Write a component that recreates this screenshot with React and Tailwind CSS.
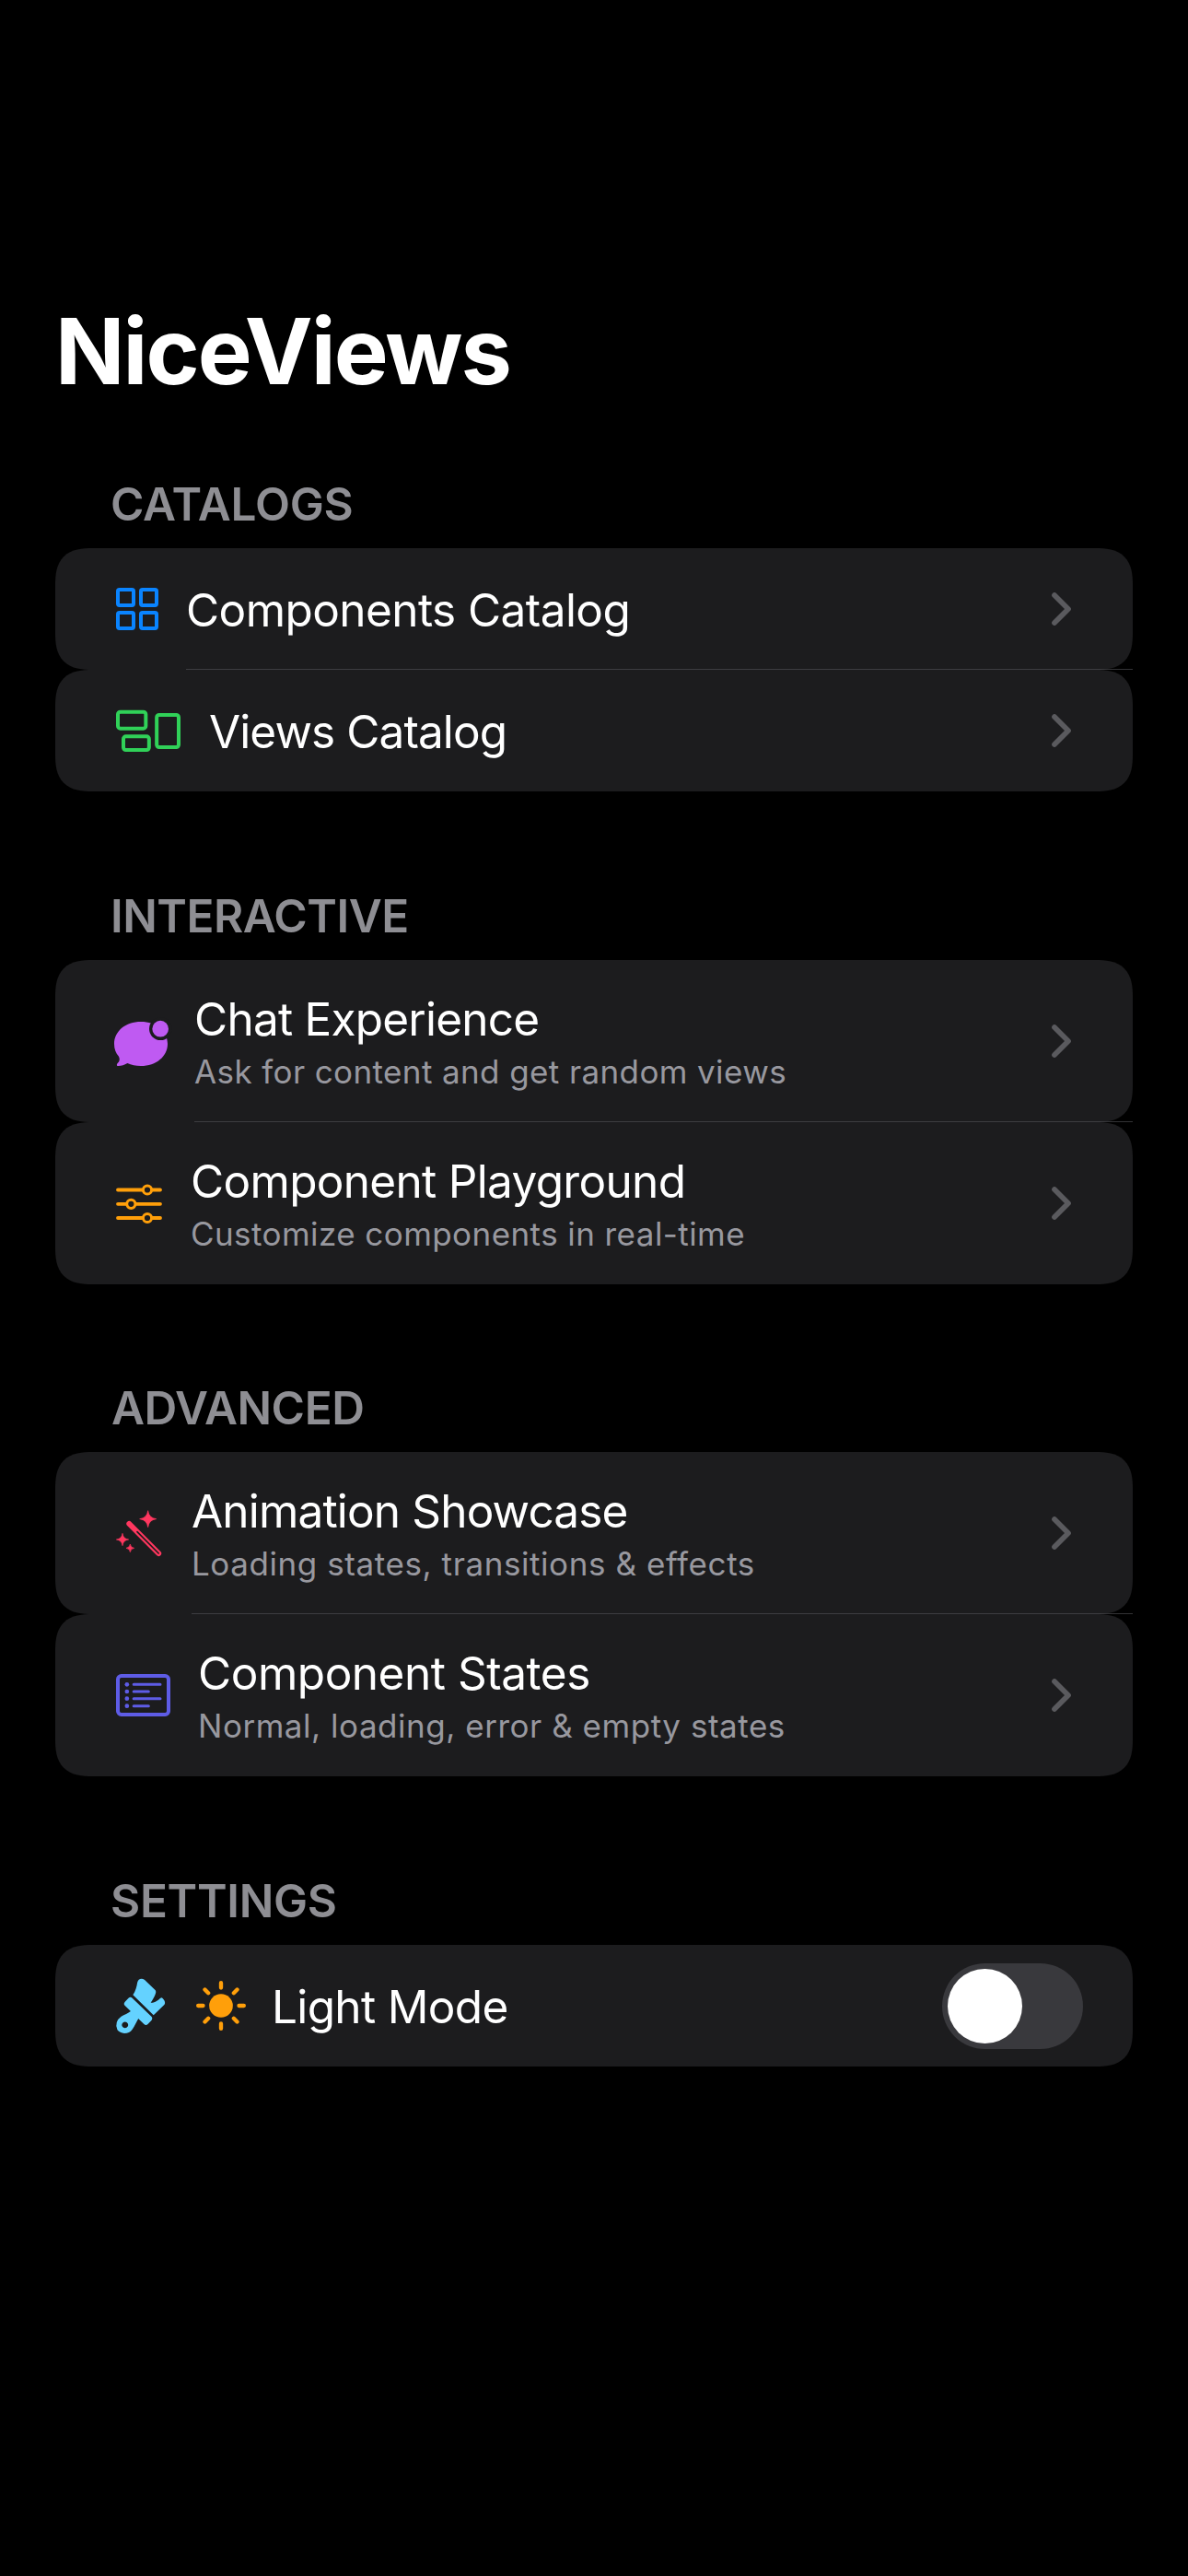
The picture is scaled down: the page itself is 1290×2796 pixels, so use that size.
const CARD = "#1c1c1e";

function IconBox({ viewBox, square, children }) {
  return (
    <svg viewBox={viewBox} className={square ? "h-[60px] w-[60px] shrink-0" : "h-[60px] w-[74px] shrink-0"} fill="none">
      {children}
    </svg>
  );
}

function GridIcon() {
  return (
    <IconBox viewBox="249 153 222 180">
      <g stroke="#0a84ff" strokeWidth="12">
        <rect x="264" y="180" width="51" height="51" rx="5" />
        <rect x="339" y="180" width="51" height="51" rx="5" />
        <rect x="264" y="255" width="51" height="51" rx="5" />
        <rect x="339" y="255" width="51" height="51" rx="5" />
      </g>
    </IconBox>
  );
}

function GroupIcon() {
  return (
    <IconBox viewBox="249 549 222 180">
      <g stroke="#30d158" strokeWidth="12">
        <rect x="264" y="578" width="91" height="54" rx="8" />
        <rect x="282" y="658" width="83.500" height="44" rx="8" />
        <rect x="390.500" y="588" width="71.500" height="105" rx="8" />
      </g>
    </IconBox>
  );
}

function ChatIcon() {
  return (
    <IconBox viewBox="249 210 222 180">
      <path
        fill="#bf5af2"
        d="M339 237C389 237 426 268 426 309C426 350 389 381 339 381C322 381 308 378 295 372C285 378 276 381 265 381C259 381 260 375 263 372C270 366 271 358 267 350C257 339 252 326 252 309C252 268 289 237 339 237Z"
      />
      <circle cx="403" cy="260" r="37" fill={CARD} />
      <circle cx="402.500" cy="260" r="26.500" fill="#bf5af2" />
    </IconBox>
  );
}

function SlidersIcon() {
  return (
    <IconBox viewBox="249 738 222 180">
      <g stroke="#ff9f0a" strokeWidth="11.5" strokeLinecap="round">
        <path d="M264 784.500H402M264 830.500H402M264 876H402" />
        <g fill={CARD} strokeWidth="9">
          <circle cx="360" cy="784.500" r="13.800" />
          <circle cx="307" cy="830.500" r="13.800" />
          <circle cx="360" cy="876" r="13.800" />
        </g>
      </g>
    </IconBox>
  );
}

function WandIcon() {
  return (
    <IconBox viewBox="249 222 222 180">
      <g strokeLinecap="round">
        <path d="M301 282L396.500 378" stroke="#ff375f" strokeWidth="18" />
        <path d="M327 308L396.500 378" stroke={CARD} strokeWidth="5" />
      </g>
      <g fill="#ff375f" stroke="#ff375f" strokeWidth="2" strokeLinejoin="round">
        <path d="M362 239Q365 263 389 266Q365 269 362 293Q359 269 335 266Q359 263 362 239Z" />
        <path d="M279 313Q281 331 299 333Q281 335 279 353Q277 335 259 333Q277 331 279 313Z" />
        <path d="M304 348Q305.500 359.500 317 361Q305.500 362.500 304 374Q302.500 362.500 291 361Q302.500 359.500 304 348Z" />
      </g>
    </IconBox>
  );
}

function ListIcon() {
  return (
    <IconBox viewBox="249 750 222 180">
      <rect x="264" y="777" width="165" height="126" rx="11" stroke="#5e5ce6" strokeWidth="12" />
      <path
        d="M315.500 805H402M315.500 828H364M315.500 851H402M315.500 875H364"
        stroke="#5e5ce6"
        strokeWidth="9"
        strokeLinecap="round"
      />
      <g fill="#5e5ce6">
        <circle cx="293.500" cy="805" r="7" />
        <circle cx="293.500" cy="828" r="7" />
        <circle cx="293.500" cy="851" r="7" />
        <circle cx="293.500" cy="875" r="7" />
      </g>
    </IconBox>
  );
}

function BrushIcon() {
  return (
    <IconBox viewBox="249 351 222 180">
      <g fill="#64d2ff" transform="scale(1.0331 1)">
        <path d="M303 406C311 394 315 378 317 365Q320 353 330 353Q335 353 340 357L374 391Q377 395 374 403C371 412 366 421 359 431C373 432 382 423 390 416Q393 413 396 416C402 422 404 427 404 432Q404 436 401 439L368 472Z" />
        <path
          fillRule="evenodd"
          d="M278 441Q272 435 278 428L289 416Q295 410 301 416L362 477Q366 482 362 488L350 501Q344 507 338 501L320 483C315 492 310 505 301 518Q292 531 276 531Q262 530 254 520Q248 508 252 495Q256 483 266 476C276 470 288 466 296 459ZM278 493.500A10 10 0 1 0 278.100 493.500Z"
        />
      </g>
    </IconBox>
  );
}

function SunIcon() {
  return (
    <IconBox viewBox="510 354 180 180" square>
      <circle cx="600" cy="444" r="38.500" fill="#ff9f0a" />
      <path
        d="M600 369.500V385.500M600 502.500V518.500M525.500 444H541.500M658.500 444H674.500M547.500 391.500L558.500 402.500M652.500 391.500L641.500 402.500M547.500 496.500L558.500 485.500M652.500 496.500L641.500 485.500"
        stroke="#ff9f0a"
        strokeWidth="13"
        strokeLinecap="round"
      />
    </IconBox>
  );
}

function Chevron() {
  return (
    <svg viewBox="426 189 63 108" className="ml-auto h-[36px] w-[21px] shrink-0" fill="none">
      <path d="M435 198L480 243L435 288" stroke="#5a5a5e" strokeWidth="17" strokeLinecap="round" strokeLinejoin="round" />
    </svg>
  );
}

function Card({ children, divider, tall }) {
  return (
    <div className={tall ? "relative h-[176px]" : "relative h-[132px]"}>
      <div className="flex h-full items-center rounded-[41px] bg-[#1c1c1e] pr-[67px] pl-[63px] [corner-shape:superellipse(1.45)]">
        {children}
      </div>
      {divider && <div className={`absolute right-0 bottom-0 h-px bg-[#545458]/60 ${divider}`} />}
    </div>
  );
}

function Label({ className, children }) {
  return <div className={`pt-[2px] text-[49.5px] leading-[60px] whitespace-nowrap text-white ${className}`}>{children}</div>;
}

function TwoLine({ className, title, titleClass, sub, subClass }) {
  return (
    <div className={`pt-[4px] whitespace-nowrap ${className}`}>
      <div className={`text-[49.5px] leading-[62px] text-white ${titleClass}`}>{title}</div>
      <div className={`text-[35px] leading-[52px] text-[#98989f] ${subClass}`}>{sub}</div>
    </div>
  );
}

function Section({ title, titleClass, className, children }) {
  return (
    <section className={className}>
      <h2 className={`pb-[18px] text-[49.5px] leading-[60px] font-semibold text-[#8e8e93] ${titleClass}`}>{title}</h2>
      {children}
    </section>
  );
}

function Toggle() {
  return (
    <div className="-mr-[13px] ml-auto flex h-[93px] w-[153px] items-center rounded-full bg-[#39393d] pl-[6px]">
      <div className="size-[81px] rounded-full bg-white" />
    </div>
  );
}

export default function App() {
  return (
    <main className="h-[2796px] w-[1290px] overflow-hidden bg-black px-[60px] pt-[321px] font-['Inter',sans-serif]">
      <h1 className="text-[99px] leading-[120px] font-bold tracking-[-1.93px] text-white">NiceViews</h1>

      <Section title="CATALOGS" titleClass="pl-[60px] tracking-[-0.2px]" className="mt-[76px]">
        <Card divider="left-[142px]">
          <GridIcon />
          <Label className="ml-[5px] tracking-[-0.57px]">Components Catalog</Label>
          <Chevron />
        </Card>
        <Card>
          <GroupIcon />
          <Label className="ml-[30px] tracking-[-0.9px]">Views Catalog</Label>
          <Chevron />
        </Card>
      </Section>

      <Section title="INTERACTIVE" titleClass="pl-[60px] tracking-[-0.5px]" className="mt-[105px]">
        <Card tall divider="left-[151px]">
          <ChatIcon />
          <TwoLine
            className="ml-[14px]"
            title="Chat Experience"
            titleClass="tracking-[-0.77px]"
            sub="Ask for content and get random views"
            subClass="tracking-[0.39px]"
          />
          <Chevron />
        </Card>
        <Card tall>
          <SlidersIcon />
          <TwoLine
            className="ml-[10px]"
            title="Component Playground"
            titleClass="tracking-[-0.68px]"
            sub="Customize components in real-time"
            subClass="tracking-[0.43px]"
          />
          <Chevron />
        </Card>
      </Section>

      <Section title="ADVANCED" titleClass="pl-[61px] tracking-[-0.43px]" className="mt-[104px]">
        <Card tall divider="left-[148px]">
          <WandIcon />
          <TwoLine
            className="ml-[11px]"
            title="Animation Showcase"
            titleClass="tracking-[-0.83px]"
            sub="Loading states, transitions & effects"
            subClass="tracking-[0.58px]"
          />
          <Chevron />
        </Card>
        <Card tall>
          <ListIcon />
          <TwoLine
            className="ml-[18px]"
            title="Component States"
            titleClass="tracking-[-0.47px]"
            sub="Normal, loading, error & empty states"
            subClass="tracking-[0.53px]"
          />
          <Chevron />
        </Card>
      </Section>

      <Section title="SETTINGS" titleClass="pl-[60px] tracking-[-0.3px]" className="mt-[105px]">
        <Card>
          <BrushIcon />
          <div className="ml-[13px] flex">
            <SunIcon />
          </div>
          <Label className="ml-[25px] tracking-[-0.67px]">Light Mode</Label>
          <Toggle />
        </Card>
      </Section>
    </main>
  );
}
